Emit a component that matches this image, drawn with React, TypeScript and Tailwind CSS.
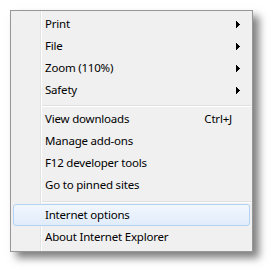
const groups = [
  [
    { label: 'Print', sub: true },
    { label: 'File', sub: true },
    { label: 'Zoom (110%)', sub: true },
    { label: 'Safety', sub: true },
  ],
  [
    { label: 'View downloads', shortcut: 'Ctrl+J' },
    { label: 'Manage add-ons' },
    { label: 'F12 developer tools' },
    { label: 'Go to pinned sites' },
  ],
  [{ label: 'Internet options', active: true }, { label: 'About Internet Explorer' }],
]

type Item = { label: string; sub?: boolean; shortcut?: string; active?: boolean }

const MenuRow = ({ item }: { item: Item }) => {
  return (
    <div
      className={
        item.active
          ? 'mx-[2px] flex h-[22px] items-center rounded-[3px] border border-[#b4d2f4] bg-gradient-to-b from-[#f2f7fe] to-[#e1ecfb] pl-[31px]'
          : 'mx-[2px] flex h-[22px] items-center rounded-[3px] border border-transparent pl-[31px]'
      }
    >
      <span className="flex-1 whitespace-nowrap">{item.label}</span>
      {item.shortcut && <span className="whitespace-nowrap">{item.shortcut}</span>}
      <span className="flex w-[17px] items-center pl-[4px]">
        {item.sub && (
          <svg width="4" height="7" viewBox="0 0 4 7" shapeRendering="crispEdges">
            <path d="M0 0h1v7H0zM1 1h1v5H1zM2 2h1v3H2zM3 3h1v1H3z" fill="#000" />
          </svg>
        )}
      </span>
    </div>
  )
}

const Separator = ({ gap }: { gap: string }) => {
  return (
    <div className={gap}>
      <div className="ml-[31px] mr-[1px] h-[1px] bg-[#e0e0e0]" />
      <div className="ml-[31px] mr-[1px] h-[1px] bg-white" />
    </div>
  )
}

export default function App() {
  return (
    <div className="h-[270px] w-[271px] bg-white p-[10px]">
      <div
        className="w-[243px] border border-[#979797] bg-[#f0f0f0] bg-[linear-gradient(to_right,#f0f0f0_29px,#e2e3e3_29px,#e2e3e3_30px,#ffffff_30px,#ffffff_31px,#f0f0f0_31px)] pt-[2px] pb-[3px] text-[11.5px] leading-none tracking-[-0.2px] text-black shadow-[6px_6px_8px_rgba(0,0,0,0.5)]"
        style={{ fontFamily: '"Noto Sans", "Open Sans", sans-serif' }}
      >
        {groups[0].map((item) => (
          <MenuRow key={item.label} item={item} />
        ))}
        <Separator gap="pt-[4px] pb-[1px]" />
        {groups[1].map((item) => (
          <MenuRow key={item.label} item={item} />
        ))}
        <Separator gap="pt-[5px] pb-[1px]" />
        {groups[2].map((item) => (
          <MenuRow key={item.label} item={item} />
        ))}
      </div>
    </div>
  )
}
